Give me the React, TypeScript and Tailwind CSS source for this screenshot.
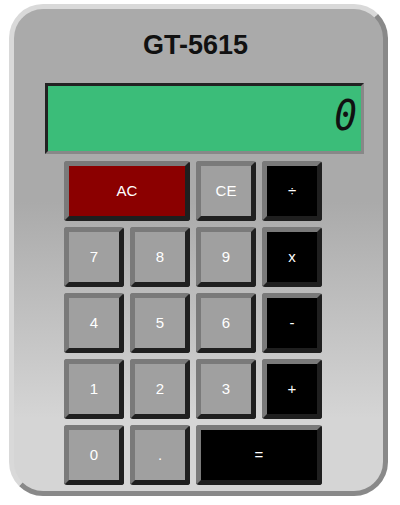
import React from 'react';

type Key = { label: string; kind: 'num' | 'clear' | 'op'; wide?: boolean };

const keys: Key[] = [
  { label: 'AC', kind: 'clear', wide: true },
  { label: 'CE', kind: 'num' },
  { label: '÷', kind: 'op' },
  { label: '7', kind: 'num' },
  { label: '8', kind: 'num' },
  { label: '9', kind: 'num' },
  { label: 'x', kind: 'op' },
  { label: '4', kind: 'num' },
  { label: '5', kind: 'num' },
  { label: '6', kind: 'num' },
  { label: '-', kind: 'op' },
  { label: '1', kind: 'num' },
  { label: '2', kind: 'num' },
  { label: '3', kind: 'num' },
  { label: '+', kind: 'op' },
  { label: '0', kind: 'num' },
  { label: '.', kind: 'num' },
  { label: '=', kind: 'op', wide: true },
];

const faces = {
  num: 'bg-[#a0a0a0]',
  clear: 'bg-[#8b0000]',
  op: 'bg-black',
};

export default function App() {
  return (
    <div className="bg-white w-[400px] h-[505px] pt-[4px] pl-[9px]">
      <div
        className="w-[379px] h-[492px] rounded-[34px] border-[5px] border-t-[#d9d9d9] border-l-[#d9d9d9] border-r-[#898989] border-b-[#898989] bg-[linear-gradient(#aaaaaa_40%,#d5d5d5_85%)]"
        style={{ fontFamily: '"Liberation Sans", Arial, sans-serif' }}
      >
        <h1 className="mt-[21px] text-center text-[27px] leading-[31px] font-bold text-[#111] pr-[6px]">GT-5615</h1>

        <div className="mt-[22px] ml-[31px] w-[319px] h-[71px] border-[3px] border-t-[#222] border-l-[#222] border-r-[#888] border-b-[#888] bg-[#3bbd79] flex items-center justify-end pr-[3px]">
          <span
            className="italic text-[42px] leading-none text-[#111] mb-[6px] scale-x-90"
            style={{ fontFamily: '"DejaVu Sans Mono", monospace' }}
          >
            0
          </span>
        </div>

        <div className="mt-[7px] ml-[50px] w-[258px] grid grid-cols-4 gap-[6px]">
          {keys.map((k) => (
            <button
              key={k.label}
              className={`h-[60px] rounded-[3px] border-[5px] border-t-[#7a7a7a] border-l-[#7a7a7a] border-r-[#1f1f1f] border-b-[#1f1f1f] text-white text-[15px] flex items-center justify-center ${faces[k.kind]} ${k.wide ? 'col-span-2' : ''}`}
            >
              {k.label}
            </button>
          ))}
        </div>
      </div>
    </div>
  );
}
